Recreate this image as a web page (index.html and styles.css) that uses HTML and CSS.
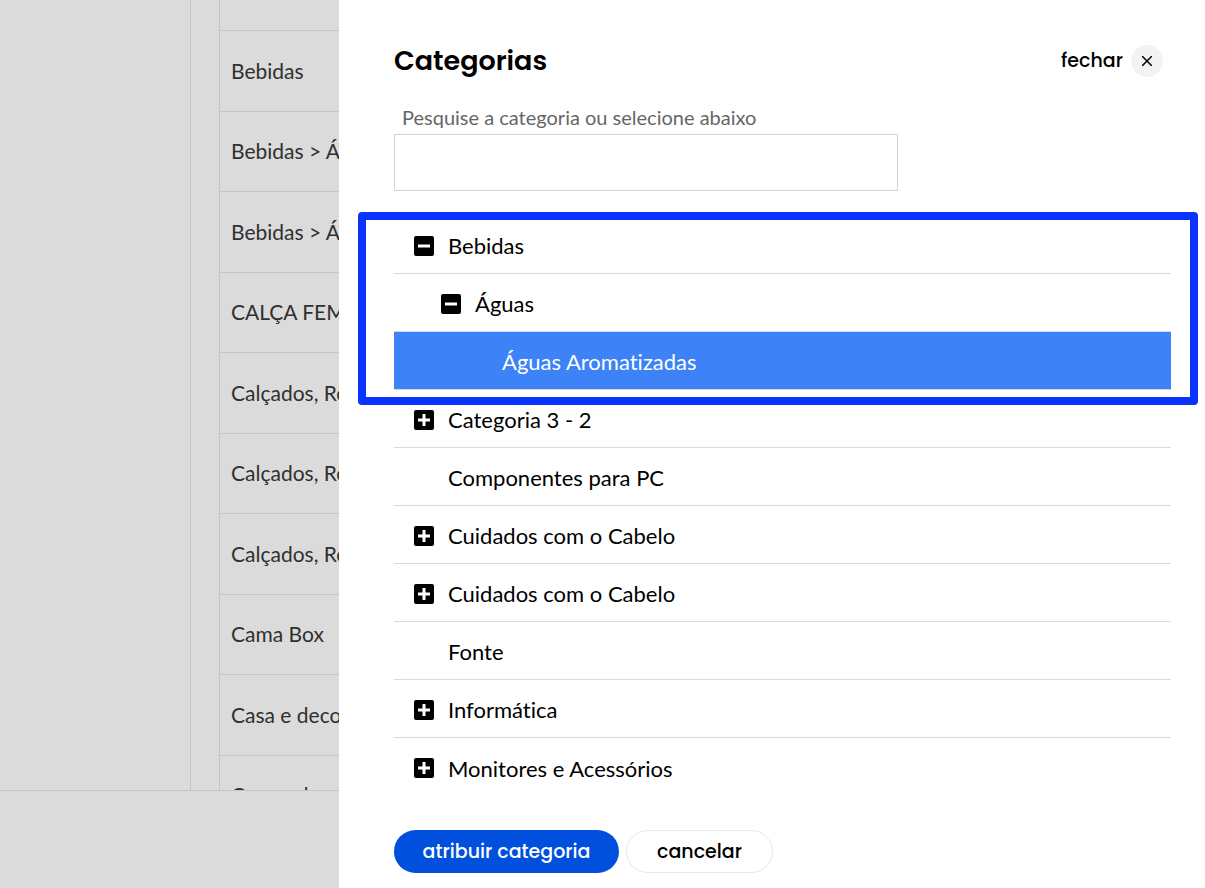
FILE: index.html
```html
<!DOCTYPE html>
<html lang="pt-BR">
<head>
  <meta charset="utf-8">
  <title>Categorias</title>
  <link rel="stylesheet" href="styles.css">
</head>
<body>
  <svg class="sprite" aria-hidden="true">
    <symbol id="icon-minus" viewBox="0 0 20 20">
      <rect width="20" height="20" rx="2"/>
      <path d="M4 10h12" stroke="#fff" stroke-width="3"/>
    </symbol>
    <symbol id="icon-plus" viewBox="0 0 20 20">
      <rect width="20" height="20" rx="2"/>
      <path d="M4 10h12M10 4v12" stroke="#fff" stroke-width="3"/>
    </symbol>
  </svg>

  <div class="page">
    <div class="sidebar"></div>
    <main class="content">
      <table class="mapping">
        <tr><td></td></tr>
        <tr><td>Bebidas</td></tr>
        <tr><td>Bebidas &gt; Águas</td></tr>
        <tr><td>Bebidas &gt; Águas</td></tr>
        <tr><td>CALÇA FEMININA</td></tr>
        <tr><td>Calçados, Roupas</td></tr>
        <tr><td>Calçados, Roupas</td></tr>
        <tr><td>Calçados, Roupas</td></tr>
        <tr><td>Cama Box</td></tr>
        <tr><td>Casa e decoração</td></tr>
        <tr><td>Casa e decoração</td></tr>
      </table>
    </main>
  </div>

  <div class="backdrop"></div>

  <section class="drawer" role="dialog" aria-labelledby="drawer-title">
    <header class="drawer-header">
      <h1 id="drawer-title">Categorias</h1>
      <button type="button" class="close">
        fechar
        <span class="close-icon">
          <svg width="10" height="10" viewBox="0 0 10 10"><path d="M0 0l10 10M10 0L0 10" stroke="#000" stroke-width="1.5"/></svg>
        </span>
      </button>
    </header>

    <div class="search">
      <label for="search">Pesquise a categoria ou selecione abaixo</label>
      <input type="text" id="search" name="search">
    </div>

    <ul class="tree">
      <li class="branch highlight">
        <div class="row">
          <button type="button" class="toggle" aria-label="Recolher Bebidas"><svg><use href="#icon-minus"/></svg></button>
          <span>Bebidas</span>
        </div>
        <ul>
          <li>
            <div class="row level-2">
              <button type="button" class="toggle" aria-label="Recolher Águas"><svg><use href="#icon-minus"/></svg></button>
              <span>Águas</span>
            </div>
            <ul>
              <li><div class="row level-3 leaf selected"><span>Águas Aromatizadas</span></div></li>
            </ul>
          </li>
        </ul>
      </li>
      <li>
        <div class="row">
          <button type="button" class="toggle" aria-label="Expandir Categoria 3 - 2"><svg><use href="#icon-plus"/></svg></button>
          <span>Categoria 3 - 2</span>
        </div>
      </li>
      <li><div class="row leaf"><span>Componentes para PC</span></div></li>
      <li>
        <div class="row">
          <button type="button" class="toggle" aria-label="Expandir Cuidados com o Cabelo"><svg><use href="#icon-plus"/></svg></button>
          <span>Cuidados com o Cabelo</span>
        </div>
      </li>
      <li>
        <div class="row">
          <button type="button" class="toggle" aria-label="Expandir Cuidados com o Cabelo"><svg><use href="#icon-plus"/></svg></button>
          <span>Cuidados com o Cabelo</span>
        </div>
      </li>
      <li><div class="row leaf"><span>Fonte</span></div></li>
      <li>
        <div class="row">
          <button type="button" class="toggle" aria-label="Expandir Informática"><svg><use href="#icon-plus"/></svg></button>
          <span>Informática</span>
        </div>
      </li>
      <li>
        <div class="row">
          <button type="button" class="toggle" aria-label="Expandir Monitores e Acessórios"><svg><use href="#icon-plus"/></svg></button>
          <span>Monitores e Acessórios</span>
        </div>
      </li>
    </ul>

    <footer class="actions">
      <button type="button" class="btn btn-primary">atribuir categoria</button>
      <button type="button" class="btn btn-outline">cancelar</button>
    </footer>
  </section>
</body>
</html>
```
FILE: styles.css
```css
* {box-sizing: border-box}

body {
  margin: 0;
  height: 100vh;
  overflow: hidden;
  font-family: Lato, "Noto Sans", sans-serif;
  font-size: 22px;
  font-variant-ligatures: none;
  color: #000;
  background: #fff;
}

button {
  padding: 0;
  border: none;
  background: none;
  color: inherit;
  font: inherit;
  cursor: pointer;
}

.sprite {
  display: none;
}

/* page behind the drawer */
.page {
  display: flex;
  height: calc(100vh - 97px);
  overflow: hidden;
  border-bottom: 1px solid #e6e6e6;
}

.sidebar {
  flex: 0 0 191px;
  border-right: 1px solid #e6e6e6;
}

.content {
  flex: 1;
  padding-left: 28px;
}

.mapping {
  width: 100%;
  border-collapse: separate;
  border-spacing: 0;
  border-left: 1px solid #e6e6e6;
  font-size: 21px;
  color: #383838;
}

.mapping td {
  height: 80px;
  padding: 0 11px 2px;
  border-bottom: 1px solid #e6e6e6;
}

.mapping tr:nth-child(even) td {
  height: 81px;
}

.mapping tr:first-child td {
  height: 31px;
}

.backdrop {
  position: fixed;
  inset: 0;
  background: rgba(0, 0, 0, 0.14);
}

/* drawer */
.drawer {
  position: fixed;
  top: 0;
  right: 0;
  bottom: 0;
  left: 339px;
  display: flex;
  flex-direction: column;
  padding: 40px 34px 15px 55px;
  background: #fff;
}

.drawer-header {
  display: flex;
  justify-content: space-between;
  align-items: center;
  height: 42px;
  padding-right: 8px;
}

h1 {
  margin: 0;
  font: 600 27px/40px Poppins, Inter, sans-serif;
}

.close {
  display: flex;
  align-items: center;
  gap: 8px;
  font: 500 19px/32px Poppins, Inter, sans-serif;
}

.close-icon {
  display: flex;
  align-items: center;
  justify-content: center;
  width: 32px;
  height: 32px;
  border-radius: 50%;
  background: #f3f3f3;
}

.search {
  margin-top: 24px;
}

.search label {
  display: block;
  padding-left: 8px;
  font-size: 20px;
  line-height: 22px;
  color: #666;
}

.search input {
  display: block;
  width: 504px;
  max-width: 100%;
  height: 57px;
  margin-top: 6px;
  padding: 0 16px;
  border: 1px solid #d3d3d3;
  font: inherit;
}

.tree {
  flex: 1;
  margin-top: 25px;
}

.tree,
.tree ul {
  padding: 0;
  list-style: none;
}

.tree {
  margin-bottom: 0;
}

.tree ul {
  margin: 0;
}

.row {
  display: flex;
  align-items: center;
  gap: 14px;
  height: 58px;
  padding-left: 20px;
  padding-top: 2px;
  border-bottom: 1px solid #dadada;
}

.tree > li:last-child .row {
  border-bottom: none;
}

.leaf {
  padding-left: 54px;
}

.level-2 {
  padding-left: 47px;
}

.level-3 {
  padding-left: 108px;
}

.selected {
  background: #3d82f7;
  color: #fff;
}

.toggle,
.toggle svg {
  display: block;
  width: 20px;
  height: 20px;
}

.highlight {
  position: relative;
}

.highlight::after {
  content: "";
  position: absolute;
  inset: -4px -27px -15px -36px;
  border: 8px solid #0a33ff;
  border-radius: 4px;
  pointer-events: none;
}

.actions {
  display: flex;
  gap: 7px;
}

.btn {
  height: 43px;
  border-radius: 22px;
  font: 500 19px/24px Poppins, Inter, sans-serif;
}

.btn-primary {
  width: 225px;
  background: #0050dd;
  color: #fff;
}

.btn-outline {
  width: 147px;
  border: 1px solid #e8e8e8;
}
```
